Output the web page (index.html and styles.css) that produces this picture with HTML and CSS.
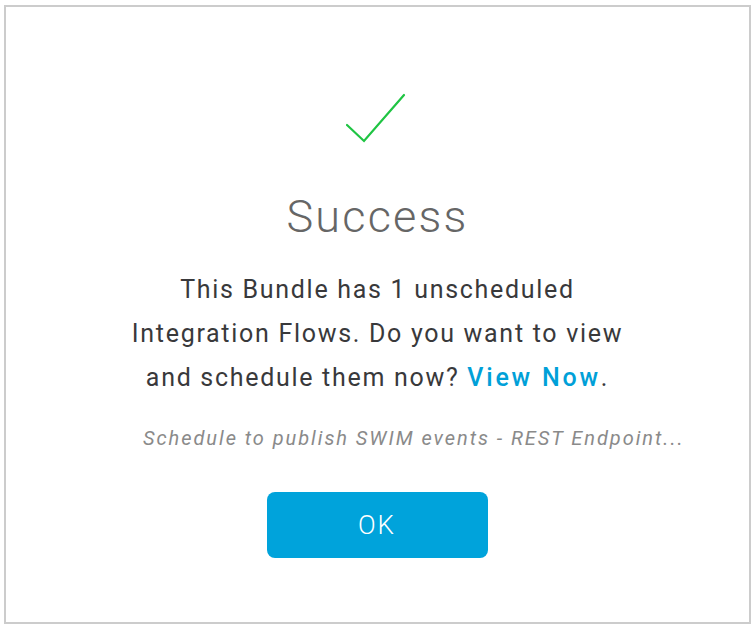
FILE: index.html
```html
<!DOCTYPE html>
<html>
<head>
<meta charset="utf-8">
<link rel="stylesheet" href="styles.css">
</head>
<body>
<div class="dialog">
  <svg class="check" width="60" height="50" viewBox="0 0 60 50">
    <polyline points="1,32 18,48 58,2" fill="none" stroke="#1fc443" stroke-width="2.2" stroke-linecap="round" stroke-linejoin="miter"/>
  </svg>
  <h1 class="title">Success</h1>
  <p class="message">This Bundle has 1 unscheduled<br>Integration Flows. Do you want to view<br>and schedule them now? <a class="link" href="#">View Now</a>.</p>
  <p class="flow">Schedule to publish SWIM events - REST Endpoint...</p>
  <button class="ok">OK</button>
</div>
</body>
</html>
```
FILE: styles.css
```css
html, body {
  margin: 0;
  padding: 0;
  background: #ffffff;
}
body {
  padding: 5px 0 0 4px;
  font-family: Roboto, "Open Sans", sans-serif;
}
.dialog {
  box-sizing: border-box;
  width: 747px;
  height: 619px;
  border: 2px solid #cccccc;
  display: flex;
  flex-direction: column;
  align-items: center;
  padding-top: 86px;
}
.check {
  display: block;
  margin-left: -4px;
}
.title {
  margin: 48px 0 0 0;
  font-weight: 300;
  font-size: 45px;
  line-height: 52px;
  color: #666666;
  letter-spacing: 2.2px;
}
.message {
  margin: 25px 0 0 0;
  text-align: center;
  font-size: 25px;
  line-height: 44px;
  color: #39393b;
  letter-spacing: 1.7px;
}
.link {
  color: #00a0d8;
  text-decoration: none;
  font-weight: 500;
  letter-spacing: 2.8px;
}
.flow {
  margin: 26px 0 0 0;
  align-self: stretch;
  padding-left: 137px;
  font-style: italic;
  font-size: 20px;
  line-height: 24px;
  color: #8a8a8a;
  letter-spacing: 1.95px;
}
.ok {
  margin-top: 42px;
  width: 221px;
  height: 66px;
  border: none;
  border-radius: 8px;
  background: #00a3db;
  color: #ffffff;
  font-family: Roboto, "Open Sans", sans-serif;
  font-size: 26px;
  font-weight: 300;
  letter-spacing: 2px;
  margin-left: -1px;
}
```
